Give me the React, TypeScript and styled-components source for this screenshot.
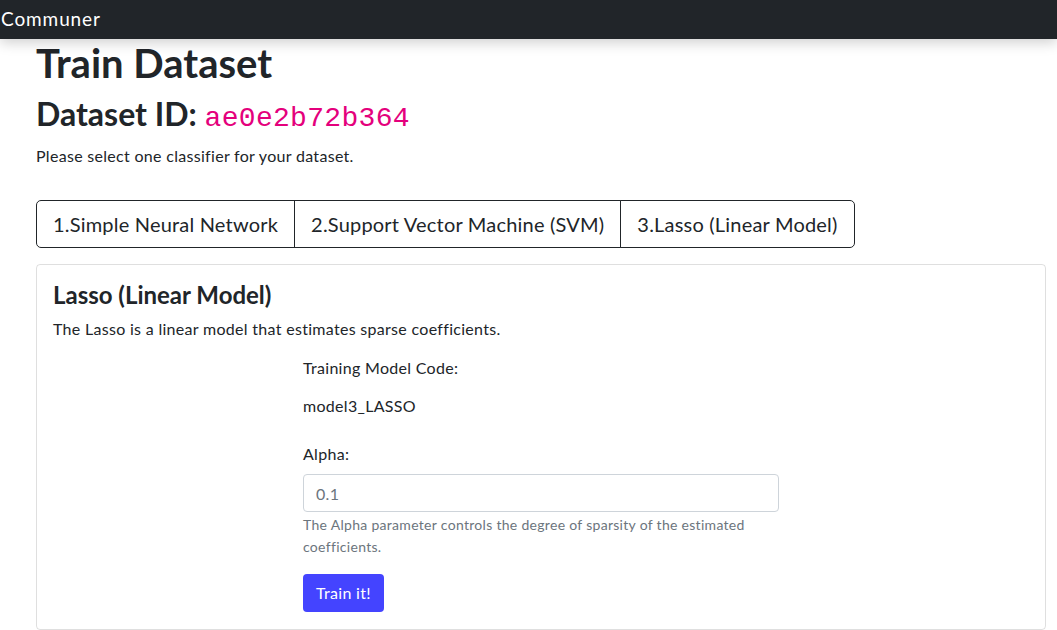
import styled, { createGlobalStyle } from "styled-components";

const GlobalStyle = createGlobalStyle`
  * { box-sizing: border-box; }
  body {
    margin: 0;
    font-family: Lato, "Noto Sans", sans-serif;
    font-size: 16px;
    line-height: 1.5;
    letter-spacing: 0.3px;
    color: #212529;
    background: #fff;
  }
`;

const NavBar = styled.nav`
  height: 39px;
  background: #212529;
  display: flex;
  align-items: center;
  box-shadow: 0 4px 12px rgba(0, 0, 0, 0.18);
  position: relative;
`;

const Brand = styled.span`
  color: #fff;
  font-size: 19px;
  letter-spacing: 0.9px;
  padding-left: 1px;
`;

const Container = styled.main`
  padding: 0 11px 0 36px;
`;

const Title = styled.h1`
  margin: 0;
  font-size: 40px;
  font-weight: 700;
  letter-spacing: 0;
  line-height: 1.2;
`;

const SubTitle = styled.h2`
  margin: 8px 0 0;
  font-size: 32px;
  font-weight: 700;
  letter-spacing: 0;
  line-height: 1.2;
`;

const Code = styled.code`
  font-family: "Liberation Mono", monospace;
  font-size: 28px;
  font-weight: 400;
  letter-spacing: 0.3px;
  color: #e4007c;
`;

const Lead = styled.p`
  margin: 8px 0 0;
`;

const Group = styled.div`
  display: inline-flex;
  margin-top: 32px;
`;

const Tab = styled.button<{ $first?: boolean; $last?: boolean }>`
  font-family: inherit;
  font-size: 20px;
  letter-spacing: 0.2px;
  line-height: 1.5;
  padding: 8px 16px;
  height: 48px;
  background: #fff;
  color: #212529;
  border: 1px solid #212529;
  margin-left: ${(p) => (p.$first ? "0" : "-1px")};
  border-radius: ${(p) =>
    p.$first ? "5px 0 0 5px" : p.$last ? "0 5px 5px 0" : "0"};
  cursor: pointer;
`;

const Card = styled.section`
  margin-top: 16px;
  border: 1px solid rgba(0, 0, 0, 0.125);
  border-radius: 4px;
  padding: 16px 16px 17px;
`;

const CardTitle = styled.h4`
  margin: 0;
  font-size: 24px;
  font-weight: 700;
  letter-spacing: 0;
  line-height: 1.2;
`;

const CardText = styled.p`
  margin: 8px 0 0;
`;

const FormCol = styled.div`
  margin: 15px 0 0 250px;
  width: 476px;
`;

const Label = styled.p<{ $gap?: number }>`
  margin: ${(p) => p.$gap ?? 0}px 0 0;
`;

const Input = styled.input`
  display: block;
  width: 100%;
  height: 38px;
  margin-top: 8px;
  padding: 6px 12px;
  font-family: inherit;
  font-size: 16px;
  letter-spacing: 0.3px;
  color: #6c757d;
  border: 1px solid #ced4da;
  border-radius: 4px;
`;

const Help = styled.div`
  margin-top: 2px;
  font-size: 14px;
  color: #6c757d;
  line-height: 1.55;
`;

const Primary = styled.button`
  margin-top: 16px;
  height: 38px;
  padding: 0 13px;
  font-family: inherit;
  font-size: 16px;
  letter-spacing: 0.3px;
  color: #fff;
  background: #4444ff;
  border: none;
  border-radius: 4px;
`;

export default function App() {
  return (
    <>
      <GlobalStyle />
      <NavBar>
        <Brand>Communer</Brand>
      </NavBar>
      <Container>
        <Title>Train Dataset</Title>
        <SubTitle>
          Dataset ID: <Code>ae0e2b72b364</Code>
        </SubTitle>
        <Lead>Please select one classifier for your dataset.</Lead>
        <Group>
          <Tab $first>1.Simple Neural Network</Tab>
          <Tab>2.Support Vector Machine (SVM)</Tab>
          <Tab $last>3.Lasso (Linear Model)</Tab>
        </Group>
        <Card>
          <CardTitle>Lasso (Linear Model)</CardTitle>
          <CardText>The Lasso is a linear model that estimates sparse coefficients.</CardText>
          <FormCol>
            <Label>Training Model Code:</Label>
            <Label $gap={14}>model3_LASSO</Label>
            <Label $gap={24}>Alpha:</Label>
            <Input defaultValue="0.1" />
            <Help>
              The Alpha parameter controls the degree of sparsity of the estimated
              coefficients.
            </Help>
            <Primary>Train it!</Primary>
          </FormCol>
        </Card>
      </Container>
    </>
  );
}
